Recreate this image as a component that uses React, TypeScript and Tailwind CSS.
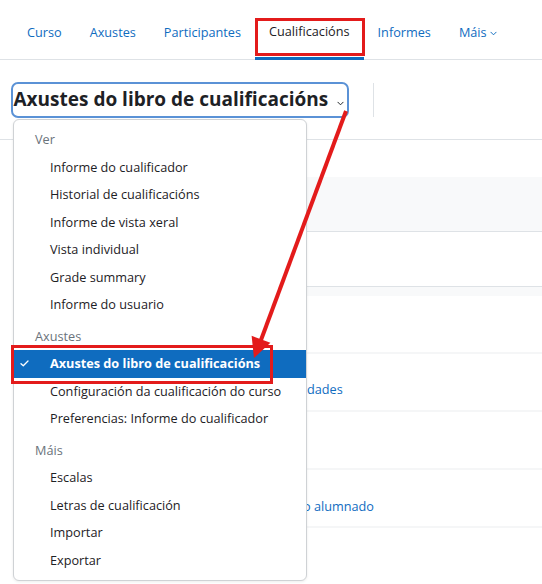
import React from "react";

const tabs = [
  { label: "Curso" },
  { label: "Axustes" },
  { label: "Participantes" },
  { label: "Cualificacións", active: true },
  { label: "Informes" },
  { label: "Máis", more: true },
];

type Item = { label: string; selected?: boolean };
const groups: { header: string; items: Item[] }[] = [
  {
    header: "Ver",
    items: [
      { label: "Informe do cualificador" },
      { label: "Historial de cualificacións" },
      { label: "Informe de vista xeral" },
      { label: "Vista individual" },
      { label: "Grade summary" },
      { label: "Informe do usuario" },
    ],
  },
  {
    header: "Axustes",
    items: [
      { label: "Axustes do libro de cualificacións", selected: true },
      { label: "Configuración da cualificación do curso" },
      { label: "Preferencias: Informe do cualificador" },
    ],
  },
  {
    header: "Máis",
    items: [
      { label: "Escalas" },
      { label: "Letras de cualificación" },
      { label: "Importar" },
      { label: "Exportar" },
    ],
  },
];

function Chevron({ className }: { className?: string }) {
  return (
    <svg className={className} viewBox="0 0 8 5" fill="none">
      <path d="M1 1l3 3 3-3" stroke="currentColor" strokeWidth="1.1" strokeLinecap="round" strokeLinejoin="round" />
    </svg>
  );
}

export default function App() {
  return (
    <div className="relative w-[542px] h-[584px] overflow-hidden bg-white font-['Open_Sans',sans-serif] text-[#1d2125]">
      {/* Secondary navigation */}
      <nav className="flex h-[60px] border-b border-[#dee2e6] pl-[13px]">
        {tabs.map((t) => (
          <div
            key={t.label}
            className={
              t.active
                ? "flex items-center px-[14px] pt-[7px] text-[12.7px] text-[#1d2125] border-b-[3px] border-[#0f6cbf] mb-[-1px]"
                : "flex items-center px-[14px] pt-[7px] text-[12.7px] text-[#0f6cbf]"
            }
          >
            {t.label}
            {t.more && <Chevron className="ml-[3px] w-[7px] h-[5px] text-[#0f6cbf]" />}
          </div>
        ))}
      </nav>

      {/* Heading row */}
      <div className="flex items-center h-[80px] border-b border-[#dee2e6] pl-[11px]">
        <div className="flex items-center h-[36px] border-[2.5px] border-[#5b92d6] rounded-[7px] pl-[0.5px] pr-[2.5px]">
          <h2 className="text-[19px] font-bold leading-none text-[#1d2125]">Axustes do libro de cualificacións</h2>
          <Chevron className="ml-[9px] mt-[7px] w-[7px] h-[5px] text-[#1d2125]" />
        </div>
        <div className="ml-[24px] w-px h-[34px] bg-[#dee2e6]" />
      </div>

      {/* Page content behind the menu */}
      <div className="ml-[14px] text-[12.7px]">
        <div className="h-[37px]" />
        <div className="h-[55px] bg-[#f8f9fa] border-b border-[#dee2e6]" />
        <div className="h-[55px] border-b border-[#dee2e6]" />
        <div className="h-[9px] bg-[#f8f9fa]" />
        <div className="h-[56px]" />
        <div className="h-[58px] border-t-2 border-[#f5f6f7] flex items-start pt-[26px] pl-[293px]">
          <span className="whitespace-nowrap text-[#0f6cbf]">dades</span>
        </div>
        <div className="h-[58px] border-t-2 border-[#f5f6f7]" />
        <div className="h-[58px] border-t-2 border-[#f5f6f7] flex items-start pt-[27px] pl-[289px]">
          <span className="whitespace-nowrap text-[#0f6cbf]">o alumnado</span>
        </div>
        <div className="h-[58px] border-t-2 border-[#f5f6f7]" />
        <div className="h-[58px] border-t-2 border-[#f5f6f7]" />
      </div>

      {/* Dropdown menu */}
      <div className="absolute left-[13px] top-[119px] w-[294px] h-[462px] bg-white border border-[#cfd2d5] rounded-[6px] shadow-[0_1px_3px_rgba(0,0,0,0.08)] pt-[6.5px] text-[12.7px]">
        {groups.map((g, gi) => (
          <div key={g.header} className={gi > 0 ? "mt-[4.5px]" : ""}>
            <div className="h-[27px] flex items-center pl-[21px] text-[#6a737b]">{g.header}</div>
            {g.items.map((it) => (
              <div
                key={it.label}
                className={
                  it.selected
                    ? "h-[27.5px] flex items-center pl-[6px] bg-[#0f6cbf] text-white font-bold"
                    : "h-[27.5px] flex items-center pl-[6px] text-[#1d2125]"
                }
              >
                <span className="w-[30px] flex items-center">
                  {it.selected && (
                    <svg viewBox="0 0 10 8" className="w-[9px] h-[7px]" fill="none">
                      <path d="M1 4.2l2.6 2.4L9 1.2" stroke="white" strokeWidth="1.5" strokeLinecap="round" strokeLinejoin="round" />
                    </svg>
                  )}
                </span>
                <span className="whitespace-nowrap">{it.label}</span>
              </div>
            ))}
          </div>
        ))}
      </div>

      {/* Annotations */}
      <div className="absolute left-[255px] top-[18px] w-[110px] h-[38px] border-[3.5px] border-[#e31b1b] pointer-events-none" />
      <div className="absolute left-[11px] top-[345px] w-[262px] h-[39px] border-[3.5px] border-[#e31b1b] pointer-events-none" />
      <svg className="absolute left-0 top-0 w-[542px] h-[584px] pointer-events-none" viewBox="0 0 542 584">
        <line x1="346" y1="111" x2="261" y2="340" stroke="#e31b1b" strokeWidth="4" />
        <polygon points="270.4,342.8 251.6,335.8 254,358" fill="#e31b1b" />
      </svg>
    </div>
  );
}
